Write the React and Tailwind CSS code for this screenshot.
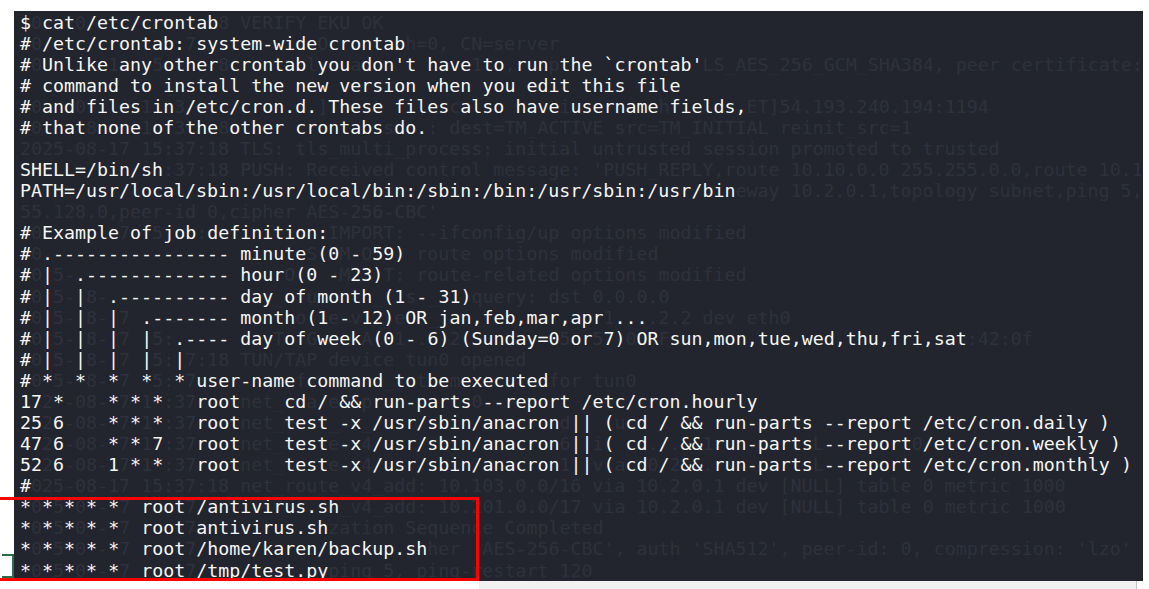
// Terminal screenshot: /etc/crontab dump over a faint openvpn log behind it

const FG = [
  "$ cat /etc/crontab",
  "# /etc/crontab: system-wide crontab",
  "# Unlike any other crontab you don't have to run the `crontab'",
  "# command to install the new version when you edit this file",
  "# and files in /etc/cron.d. These files also have username fields,",
  "# that none of the other crontabs do.",
  "",
  "SHELL=/bin/sh",
  "PATH=/usr/local/sbin:/usr/local/bin:/sbin:/bin:/usr/sbin:/usr/bin",
  "",
  "# Example of job definition:",
  "# .---------------- minute (0 - 59)",
  "# |  .------------- hour (0 - 23)",
  "# |  |  .---------- day of month (1 - 31)",
  "# |  |  |  .------- month (1 - 12) OR jan,feb,mar,apr ...",
  "# |  |  |  |  .---- day of week (0 - 6) (Sunday=0 or 7) OR sun,mon,tue,wed,thu,fri,sat",
  "# |  |  |  |  |",
  "# *  *  *  *  * user-name command to be executed",
  "17 *    * * *   root    cd / && run-parts --report /etc/cron.hourly",
  "25 6    * * *   root    test -x /usr/sbin/anacron || ( cd / && run-parts --report /etc/cron.daily )",
  "47 6    * * 7   root    test -x /usr/sbin/anacron || ( cd / && run-parts --report /etc/cron.weekly )",
  "52 6    1 * *   root    test -x /usr/sbin/anacron || ( cd / && run-parts --report /etc/cron.monthly )",
  "#",
  "* * * * *  root /antivirus.sh",
  "* * * * *  root antivirus.sh",
  "* * * * *  root /home/karen/backup.sh",
  "* * * * *  root /tmp/test.py",
]

const TS = "2025-08-17 15:37:18 "

const GHOST = [
  TS + "VERIFY EKU OK",
  TS + "VERIFY OK: depth=0, CN=server",
  TS + "Control Channel: TLSv1.3, cipher TLSv1.3 TLS_AES_256_GCM_SHA384, peer certificate: 2048 bit RSA, signature: RSA-SHA256",
  "",
  TS + "[server] Peer Connection Initiated with [AF_INET]54.193.240.194:1194",
  TS + "TLS: move_session: dest=TM_ACTIVE src=TM_INITIAL reinit_src=1",
  TS + "TLS: tls_multi_process: initial untrusted session promoted to trusted",
  TS + "PUSH: Received control message: 'PUSH_REPLY,route 10.10.0.0 255.255.0.0,route 10.101.0.0 255.255.128.0,route 10.103.0.0 255.255.0.0",
  "route 10.103.0.0 255.255.0.0,route 10.201.0.0 255.255.128.0,".slice(-56) +
    "route-gateway 10.2.0.1,topology subnet,ping 5,ping-restart 120,ifconfig 10.2.0.2 2",
  "55.128.0,peer-id 0,cipher AES-256-CBC'",
  TS + "OPTIONS IMPORT: --ifconfig/up options modified",
  TS + "OPTIONS IMPORT: route options modified",
  TS + "OPTIONS IMPORT: route-related options modified",
  TS + "net_route_v4_best_gw query: dst 0.0.0.0",
  TS + "net_route_v4_best_gw result: via 10.0.2.2 dev eth0",
  TS + "ROUTE_GATEWAY 10.0.2.2/255.255.255.0 IFACE=eth0 HWADDR=08:00:27:6b:42:0f",
  TS + "TUN/TAP device tun0 opened",
  TS + "net_iface_mtu_set: mtu 1500 for tun0",
  TS + "net_iface_up: set tun0 up",
  TS + "net_addr_v4_add: 10.2.0.2/17 dev tun0",
  TS + "net_route_v4_add: 10.10.0.0/16 via 10.2.0.1 dev [NULL] table 0 metric 1000",
  TS + "net_route_v4_add: 10.101.0.0/17 via 10.2.0.1 dev [NULL] table 0 metric 1000",
  TS + "net_route_v4_add: 10.103.0.0/16 via 10.2.0.1 dev [NULL] table 0 metric 1000",
  TS + "net_route_v4_add: 10.201.0.0/17 via 10.2.0.1 dev [NULL] table 0 metric 1000",
  TS + "Initialization Sequence Completed",
  TS + "Data Channel: cipher 'AES-256-CBC', auth 'SHA512', peer-id: 0, compression: 'lzo'",
  TS + "Timers: ping 5, ping-restart 120",
]

// merge a foreground line with the faint line behind it, column by column
function segments(fg, gh) {
  const len = Math.max(fg.length, gh.length)
  const out = []
  for (let c = 0; c < len; c++) {
    const f = fg[c]
    const front = f !== undefined && f !== " "
    const ch = front ? f : gh[c] ?? " "
    const last = out[out.length - 1]
    if (last && last.front === front) last.text += ch
    else out.push({ front, text: ch })
  }
  return out
}

function Row({ fg, gh }) {
  return (
    <div className="h-[21.08px] whitespace-pre leading-[21.08px]">
      {segments(fg, gh).map((s, i) => (
        <span
          key={i}
          className={s.front ? "text-[#f6f6f6]" : "text-[#2e313b]"}
        >
          {s.text}
        </span>
      ))}
    </div>
  )
}

export default function App() {
  return (
    <div className="relative h-[589px] w-[1149px] overflow-hidden bg-white">
      <div className="ml-[14px] mt-[11px] h-[570px] w-[1129px] overflow-hidden bg-[#22252e] pl-[6px] pt-[0.5px] font-['DejaVu_Sans_Mono',monospace] text-[18.3px]">
        {FG.map((line, i) => (
          <Row key={i} fg={line} gh={GHOST[i] || ""} />
        ))}
      </div>

      {/* light strip peeking under the terminal */}
      <div className="ml-[479px] h-[8px] w-[658px] border-r border-[#c9c9c9] bg-[#f1f1f1]" />

      {/* annotation boxes drawn over the screenshot */}
      <div className="absolute left-[-3px] top-[497px] h-[84px] w-[482px] border-[3px] border-[#ff0000]" />
      <div className="absolute left-[2px] top-[554px] h-[24px] w-[12px] border-y-2 border-r-2 border-[#2e6b48]" />
    </div>
  )
}
